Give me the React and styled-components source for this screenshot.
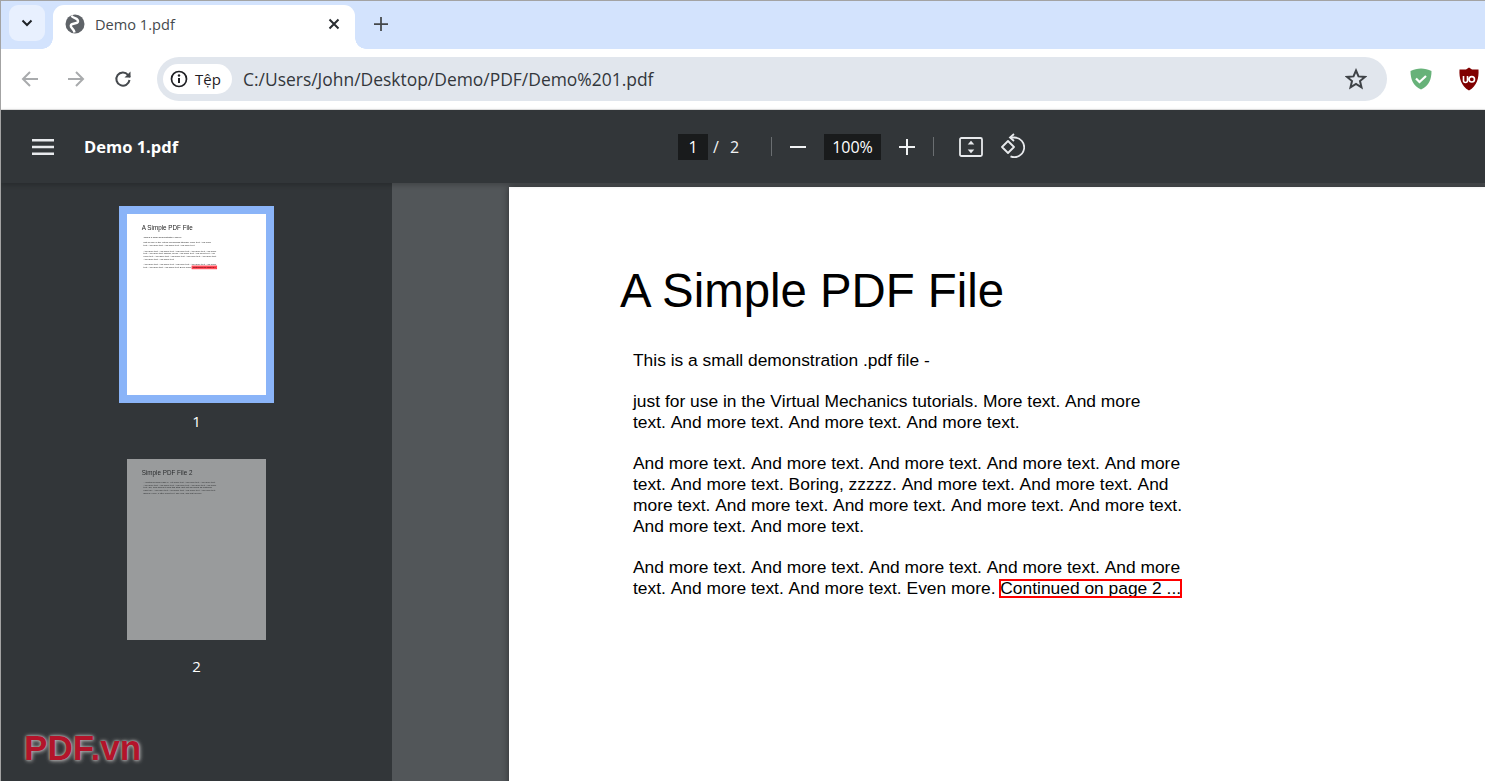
import React from 'react'
import styled, { createGlobalStyle } from 'styled-components'

const GlobalStyle = createGlobalStyle`
    html, body {
        margin: 0;
        height: 100%;
        overflow: hidden;
    }
    body {
        font-family: "Open Sans", "Noto Sans", sans-serif;
    }
`

const Win = styled.div`
    display: flex;
    flex-direction: column;
    height: 781px;
    box-sizing: border-box;
    border-top: 1px solid #a3a3a3;
    border-left: 1px solid #a3a3a3;
    overflow: hidden;
`

/* chrome tabs */
const TabStrip = styled.div`
    display: flex;
    align-items: flex-end;
    flex: 0 0 48px;
    background: #d3e3fd;
    padding-left: 8px;
`

const TabSearch = styled.div`
    display: flex;
    align-items: center;
    justify-content: center;
    width: 36px;
    height: 36px;
    margin-bottom: 8px;
    border-radius: 9px;
    background: #e8f0fe;
`

const Tab = styled.div`
    position: relative;
    display: flex;
    align-items: center;
    width: 302px;
    height: 44px;
    margin-left: 8px;
    box-sizing: border-box;
    padding: 0 15px 6px 12px;
    background: #fff;
    border-radius: 11px 11px 0 0;
    color: #45494d;
    font-size: 14.6px;

    &::before,
    &::after {
        content: '';
        position: absolute;
        bottom: 0;
        width: 11px;
        height: 11px;
        background: radial-gradient(circle at var(--cx) 0, #d3e3fd 10.5px, #fff 11px);
    }
    &::before {
        left: -11px;
        --cx: 0;
    }
    &::after {
        right: -11px;
        --cx: 100%;
    }
`

const TabTitle = styled.span`
    flex: 1;
    margin-left: 10px;
`

const NewTab = styled.div`
    display: flex;
    margin: 0 0 18px 19px;
`

/* address bar */
const Toolbar = styled.div`
    display: flex;
    align-items: center;
    flex: 0 0 60px;
    background: #fff;
    border-bottom: 1px solid #e4e4e4;
    box-sizing: content-box;
`

const NavButton = styled.div`
    display: flex;
    align-items: center;
    justify-content: center;
    width: 24px;
    margin-left: ${(props) => props.$gap}px;
`

const Omnibox = styled.div`
    display: flex;
    align-items: center;
    width: 1230px;
    height: 44px;
    margin-left: 22px;
    box-sizing: border-box;
    padding: 0 20px 0 6px;
    border-radius: 22px;
    background: #e1e6ed;
`

const Chip = styled.div`
    display: flex;
    align-items: center;
    gap: 7px;
    height: 30px;
    width: 69px;
    box-sizing: border-box;
    padding-left: 7px;
    border-radius: 15px;
    background: #fff;
    color: #1f2024;
    font-size: 15px;
`

const Url = styled.div`
    flex: 1;
    margin-left: 11px;
    color: #33373c;
    font-size: 17.45px;
`

const Extension = styled.div`
    display: flex;
    flex: none;
    margin-left: ${(props) => props.$gap}px;
`

/* pdf viewer toolbar */
const ViewerBar = styled.div`
    position: relative;
    z-index: 2;
    display: flex;
    align-items: center;
    flex: 0 0 73px;
    background: #323639;
    box-shadow: 0 2px 5px rgba(0, 0, 0, 0.22);
    color: #f1f3f4;
`

const BarLeft = styled.div`
    display: flex;
    align-items: center;
    flex: 0 0 677px;
    padding-left: 31px;
    box-sizing: border-box;
`

const DocTitle = styled.div`
    margin-left: 30px;
    color: #fff;
    font-size: 16.5px;
    font-weight: 700;
`

const NumBox = styled.div`
    display: flex;
    align-items: center;
    justify-content: center;
    width: ${(props) => props.$w}px;
    height: 26px;
    background: #191b1c;
    color: #fff;
    font-size: 16px;
`

const Count = styled.span`
    width: 63px;
    padding-left: 5px;
    box-sizing: border-box;
    font-size: 16px;
    color: #f1f3f4;
    word-spacing: 7px;
`

const Divider = styled.div`
    width: 1px;
    height: 19px;
    background: #6a6e71;
`

const BarIcon = styled.div`
    display: flex;
    margin-left: ${(props) => props.$gap}px;
`

/* body */
const Body = styled.div`
    display: flex;
    flex: 1;
    min-height: 0;
`

const Sidebar = styled.div`
    display: flex;
    flex-direction: column;
    align-items: center;
    flex: 0 0 391px;
    padding-top: 23px;
    box-sizing: border-box;
    background: #323639;
`

const ThumbFrame = styled.div`
    border: 8px solid ${(props) => (props.$active ? '#8ab4f8' : 'transparent')};
`

const ThumbLabel = styled.div`
    margin: 8px 0 20px;
    color: #fff;
    font-size: 15px;
    line-height: 20px;
`

const Main = styled.div`
    flex: 1;
    min-width: 0;
    overflow: hidden;
    padding: 4px 0 0 117px;
    background: #525659;
`

const Page = styled.div`
    width: 1045px;
    height: 1361px;
    box-sizing: border-box;
    padding: 74px 0 0 111px;
    background: #fff;
    box-shadow: 0 0 7px rgba(0, 0, 0, 0.45);
    color: #000;
    font-family: "Liberation Sans", Arial, sans-serif;
`

const Heading = styled.h1`
    margin: 0 0 29px;
    font-size: 47.35px;
    font-weight: 400;
    line-height: 60px;
`

const Para = styled.p`
    margin: 0 0 20px 13px;
    font-size: 17.4px;
    font-kerning: none;
    line-height: 21px;
    white-space: nowrap;
`

const PageLink = styled.span`
    display: inline-block;
    line-height: 17px;
    outline: 2px solid #f00;
    outline-offset: -1px;
`

const ThumbPage = styled.div`
    width: 139px;
    height: 181px;
    overflow: hidden;
    background: #fff;
    opacity: ${(props) => (props.$active ? 1 : 0.5)};

    ${Page} {
        transform: scale(0.133);
        transform-origin: 0 0;
        filter: blur(4px);
        box-shadow: none;
        color: #222;
    }
    ${PageLink} {
        background: #ff2b3a;
        outline-width: 6px;
        outline-color: #ff2b3a;
    }
`

const Watermark = styled.div`
    position: absolute;
    left: 24px;
    top: 728px;
    color: #b3142a;
    font-family: "Liberation Sans", Arial, sans-serif;
    font-size: 35px;
    font-weight: 700;
    letter-spacing: 0.1px;
    text-shadow: 0 0 2px #b8b8b8, 0 0 4px #a0a0a0, 1px 1px 4px #888;
`

function PageOne() {
    return (
        <Page>
            <Heading>A Simple PDF File</Heading>
            <Para>This is a small demonstration .pdf file -</Para>
            <Para>
                just for use in the Virtual Mechanics tutorials. More text. And more<br />
                text. And more text. And more text. And more text.
            </Para>
            <Para>
                And more text. And more text. And more text. And more text. And more<br />
                text. And more text. Boring, zzzzz. And more text. And more text. And<br />
                more text. And more text. And more text. And more text. And more text.<br />
                And more text. And more text.
            </Para>
            <Para>
                And more text. And more text. And more text. And more text. And more<br />
                text. And more text. And more text. Even more. <PageLink>Continued on page 2 ...</PageLink>
            </Para>
        </Page>
    )
}

function PageTwo() {
    return (
        <Page>
            <Heading>Simple PDF File 2</Heading>
            <Para>
                ...continued from page 1. Yet more text. And more text. And more text.<br />
                And more text. And more text. And more text. And more text. And more<br />
                text. Oh, how boring typing this stuff. But not as boring as watching<br />
                paint dry. And more text. And more text. And more text. And more text.<br />
                Boring. More, a little more text. The end, and just as well.
            </Para>
        </Page>
    )
}

const Globe = () => (
    <svg width="20" height="20" viewBox="0 0 20 20" fill="none">
        <circle cx="10" cy="10" r="9.5" fill="#5f6368" />
        <path d="M6.500 1.500C7.500 5 13.500 3.500 13 7.500C12.500 10.500 6.500 8.500 5.800 11.500C5.300 14 9 14.500 9.500 18.500" stroke="#fff" strokeWidth="2.400" />
    </svg>
)

const Chevron = () => (
    <svg width="12" height="8" viewBox="0 0 12 8" fill="none" stroke="#1f2328" strokeWidth="2">
        <path d="M1.500 1.500 6 6l4.500-4.500" />
    </svg>
)

const Close = () => (
    <svg width="12" height="12" viewBox="0 0 12 12" fill="none" stroke="#2a2d31" strokeWidth="2">
        <path d="M1.500 1.500l9 9M10.500 1.500l-9 9" />
    </svg>
)

const Plus = ({ size = 16, color = '#444749', width = 2 }) => (
    <svg width={size} height={size} viewBox="0 0 16 16" fill="none" stroke={color} strokeWidth={width}>
        <path d="M8 0v16M0 8h16" />
    </svg>
)

const ArrowLeft = ({ flip }) => (
    <svg width="18" height="18" viewBox="0 0 18 18" fill="none" stroke="#a9abad" strokeWidth="2" style={flip ? { transform: 'scaleX(-1)' } : undefined}>
        <path d="M17 9H2M9 2 2 9l7 7" />
    </svg>
)

const Reload = () => (
    <svg width="18" height="18" viewBox="0 0 18 18" fill="none" stroke="#45494d" strokeWidth="2">
        <path d="M15.500 10a6.600 6.600 0 1 1-1.500-5.200L16 7" />
        <path d="M16.500 1.500V7.500H10.500" strokeWidth="0" fill="#45494d" />
    </svg>
)

const Info = () => (
    <svg width="18" height="18" viewBox="0 0 18 18" fill="none">
        <circle cx="9" cy="9" r="7.500" stroke="#1f2024" strokeWidth="1.700" />
        <path d="M9 8v5" stroke="#1f2024" strokeWidth="2" />
        <circle cx="9" cy="5.500" r="1.200" fill="#1f2024" />
    </svg>
)

const Star = () => (
    <svg width="22" height="22" viewBox="0 0 22 22" fill="none" stroke="#3f4347" strokeWidth="2" strokeLinejoin="miter">
        <path d="M11 2.500l2.500 5.900 6.400.5-4.900 4.200 1.500 6.200L11 16l-5.500 3.300L7 13.100 2.100 8.900l6.400-.5z" />
    </svg>
)

const GuardShield = () => (
    <svg width="22" height="22" viewBox="0 0 22 22">
        <path d="M11 .5C7.500.5 3.500 1.500.5 3c0 8 2.500 15 10.500 18.500C19 18 21.500 11 21.500 3 18.500 1.500 14.500.5 11 .5z" fill="#67b279" />
        <path d="M6 10.500l3.500 3.500L16 8" fill="none" stroke="#fff" strokeWidth="2.200" />
    </svg>
)

const UblockShield = () => (
    <svg width="20" height="24" viewBox="0 0 20 24">
        <path d="M10 0.500 13 2.500 19.500 2.500C20 11 18 19 10 23.500 2 19 0 11 .5 2.500L7 2.500z" fill="#800000" />
        <path d="M4.500 9v4.500a2 2 0 0 0 4 0V9M15.500 12.300a2.700 2.700 0 1 1-5.400 0 2.700 2.700 0 0 1 5.400 0z" fill="none" stroke="#fff" strokeWidth="1.600" />
    </svg>
)

const Menu = () => (
    <svg width="22" height="18" viewBox="0 0 22 18" fill="#e8eaed">
        <path d="M0 1h22v2.500H0zM0 7.800h22v2.500H0zM0 14.500h22V17H0z" />
    </svg>
)

const Minus = () => (
    <svg width="16" height="16" viewBox="0 0 16 16" stroke="#f1f3f4" strokeWidth="2">
        <path d="M0 8h16" />
    </svg>
)

const FitPage = () => (
    <svg width="24" height="20" viewBox="0 0 24 20" fill="none">
        <rect x="1" y="1" width="22" height="18" rx="1.500" stroke="#e8eaed" strokeWidth="1.800" />
        <path d="M12 3.800l3.300 3.700H8.700zM12 16.200l-3.300-3.700h6.600z" fill="#e8eaed" />
    </svg>
)

const Rotate = () => (
    <svg width="24" height="28" viewBox="0 0 24 28" fill="none" stroke="#e8eaed" strokeWidth="1.800">
        <path d="M7 8l6 6-6 6-6-6z" strokeLinejoin="round" />
        <path d="M9 4.500H13.200A9.800 9.800 0 1 1 9.500 23.300" />
        <path d="M13 1 9 4.500 13 8" />
    </svg>
)

export default function App() {
    return (
        <Win>
            <GlobalStyle />
            <TabStrip>
                <TabSearch><Chevron /></TabSearch>
                <Tab>
                    <Globe />
                    <TabTitle>Demo 1.pdf</TabTitle>
                    <Close />
                </Tab>
                <NewTab><Plus size={14} /></NewTab>
            </TabStrip>
            <Toolbar>
                <NavButton $gap={17}><ArrowLeft /></NavButton>
                <NavButton $gap={22}><ArrowLeft flip /></NavButton>
                <NavButton $gap={23}><Reload /></NavButton>
                <Omnibox>
                    <Chip><Info />Tệp</Chip>
                    <Url>C:/Users/John/Desktop/Demo/PDF/Demo%201.pdf</Url>
                    <Star />
                </Omnibox>
                <Extension $gap={23}><GuardShield /></Extension>
                <Extension $gap={27}><UblockShield /></Extension>
            </Toolbar>
            <ViewerBar>
                <BarLeft>
                    <Menu />
                    <DocTitle>Demo 1.pdf</DocTitle>
                </BarLeft>
                <NumBox $w={30}>1</NumBox>
                <Count>/ 2</Count>
                <Divider />
                <BarIcon $gap={18}><Minus /></BarIcon>
                <BarIcon $gap={18} />
                <NumBox $w={57}>100%</NumBox>
                <BarIcon $gap={18}><Plus color="#f1f3f4" /></BarIcon>
                <BarIcon $gap={18} />
                <Divider />
                <BarIcon $gap={25}><FitPage /></BarIcon>
                <BarIcon $gap={18}><Rotate /></BarIcon>
            </ViewerBar>
            <Body>
                <Sidebar>
                    <ThumbFrame $active>
                        <ThumbPage $active><PageOne /></ThumbPage>
                    </ThumbFrame>
                    <ThumbLabel>1</ThumbLabel>
                    <ThumbFrame>
                        <ThumbPage><PageTwo /></ThumbPage>
                    </ThumbFrame>
                    <ThumbLabel>2</ThumbLabel>
                </Sidebar>
                <Main>
                    <PageOne />
                </Main>
            </Body>
            <Watermark>PDF.vn</Watermark>
        </Win>
    )
}
